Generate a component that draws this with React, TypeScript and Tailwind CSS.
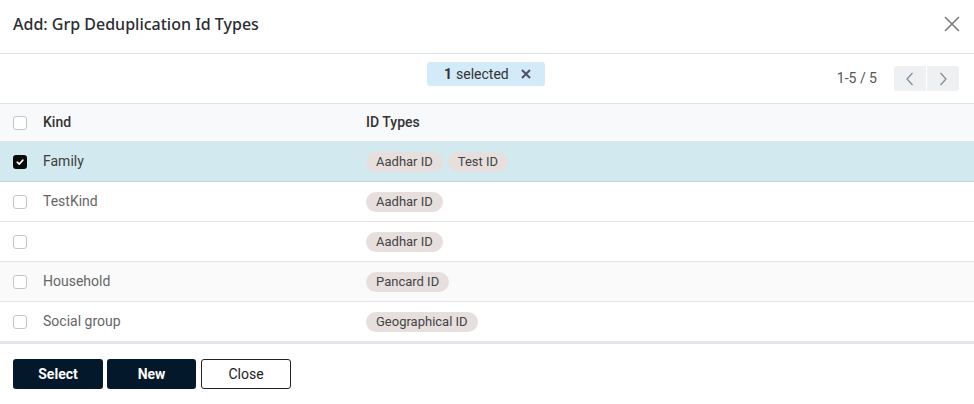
import React from "react";

const Check = ({ checked }: { checked?: boolean }) =>
  checked ? (
    <div className="w-[14px] h-[14px] rounded-[3px] bg-[#0b0b0b] flex items-center justify-center">
      <svg width="10" height="10" viewBox="0 0 10 10">
        <path d="M2.2 5.2 L4.2 7.1 L7.9 3.1" stroke="white" strokeWidth="1.6" fill="none" strokeLinecap="round" strokeLinejoin="round" />
      </svg>
    </div>
  ) : (
    <div className="w-[14px] h-[14px] rounded-[3px] border border-[#c4c4c4] bg-white" />
  );

const Chip = ({ label }: { label: string }) => (
  <span className="inline-flex items-center h-[20px] px-[10px] rounded-full bg-[#e6dfde] text-[13px] text-[#444] leading-none">
    {label}
  </span>
);

const rows = [
  { kind: "Family", ids: ["Aadhar ID", "Test ID"], selected: true },
  { kind: "TestKind", ids: ["Aadhar ID"] },
  { kind: "", ids: ["Aadhar ID"] },
  { kind: "Household", ids: ["Pancard ID"], hover: true },
  { kind: "Social group", ids: ["Geographical ID"] },
];

export default function App() {
  return (
    <div className="w-[974px] h-[404px] bg-white font-['Roboto',sans-serif] text-[14px] overflow-hidden">
      <div className="h-[54px] flex items-center justify-between pl-[13px] pr-[14px] border-b border-[#dee2e6]">
        <div className="font-['Noto_Sans',sans-serif] text-[16px] font-medium text-[#2a2d31] -mt-[6px]">
          Add: Grp Deduplication Id Types
        </div>
        <svg width="16" height="16" viewBox="0 0 16 16" className="-mt-[6px]">
          <path d="M1 1 L15 15 M15 1 L1 15" stroke="#7a7a7a" strokeWidth="1.6" />
        </svg>
      </div>
      <div className="h-[50px] flex items-center border-b border-[#dee2e6] relative">
        <div className="absolute left-[427px] top-[8px] h-[24px] w-[118px] rounded-[3px] bg-[#d3eaf8] flex items-center pl-[17px] text-[#333]">
          <span className="font-bold">1</span>
          <span className="ml-[4px]">selected</span>
          <svg width="10" height="10" viewBox="0 0 10 10" className="ml-[12px]">
            <path d="M1 1 L9 9 M9 1 L1 9" stroke="#4f4f6f" strokeWidth="2" />
          </svg>
        </div>
        <div className="ml-auto flex items-center pr-[15px]">
          <span className="text-[#555] mr-[17px]">1-5 / 5</span>
          <div className="flex h-[25px] rounded-[3px] overflow-hidden">
            <div className="w-[32px] bg-[#eef0f2] flex items-center justify-center">
              <svg width="10" height="14" viewBox="0 0 10 14"><path d="M7.5 1 L2 7 L7.5 13" stroke="#7d8a9c" strokeWidth="1.2" fill="none" /></svg>
            </div>
            <div className="w-px bg-white" />
            <div className="w-[32px] bg-[#eef0f2] flex items-center justify-center">
              <svg width="10" height="14" viewBox="0 0 10 14"><path d="M2.5 1 L8 7 L2.5 13" stroke="#7d8a9c" strokeWidth="1.2" fill="none" /></svg>
            </div>
          </div>
        </div>
      </div>
      <div className="h-[38px] bg-[#f8f9fa] flex items-center border-b border-[#dee2e6] text-[#333] font-medium">
        <div className="w-[43px] pl-[13px]"><Check /></div>
        <div className="w-[323px]">Kind</div>
        <div>ID Types</div>
      </div>
      {rows.map((r, i) => (
        <div
          key={i}
          className={
            "h-[40px] flex items-center border-b " +
            (r.selected
              ? "bg-[#d2eaef] border-[#b9d8e0] text-[#3d3d3d]"
              : r.hover
              ? "bg-[#fafafa] border-[#e3e5e8] text-[#666]"
              : "bg-white border-[#e3e5e8] text-[#666]")
          }
        >
          <div className="w-[43px] pl-[13px]"><Check checked={r.selected} /></div>
          <div className="w-[323px]">{r.kind}</div>
          <div className="flex gap-[5px]">
            {r.ids.map((id) => (
              <Chip key={id} label={id} />
            ))}
          </div>
        </div>
      ))}
      <div className="h-[2px] bg-[#e2e5e9]" />
      <div className="flex gap-[4px] pl-[13px] pt-[15px]">
        <button className="w-[90px] h-[30px] rounded-[3px] bg-[#03182a] text-white font-bold">Select</button>
        <button className="w-[89px] h-[30px] rounded-[3px] bg-[#03182a] text-white font-bold">New</button>
        <button className="w-[90px] h-[30px] rounded-[3px] bg-white border border-[#222] text-[#222] ml-[1px]">Close</button>
      </div>
    </div>
  );
}
